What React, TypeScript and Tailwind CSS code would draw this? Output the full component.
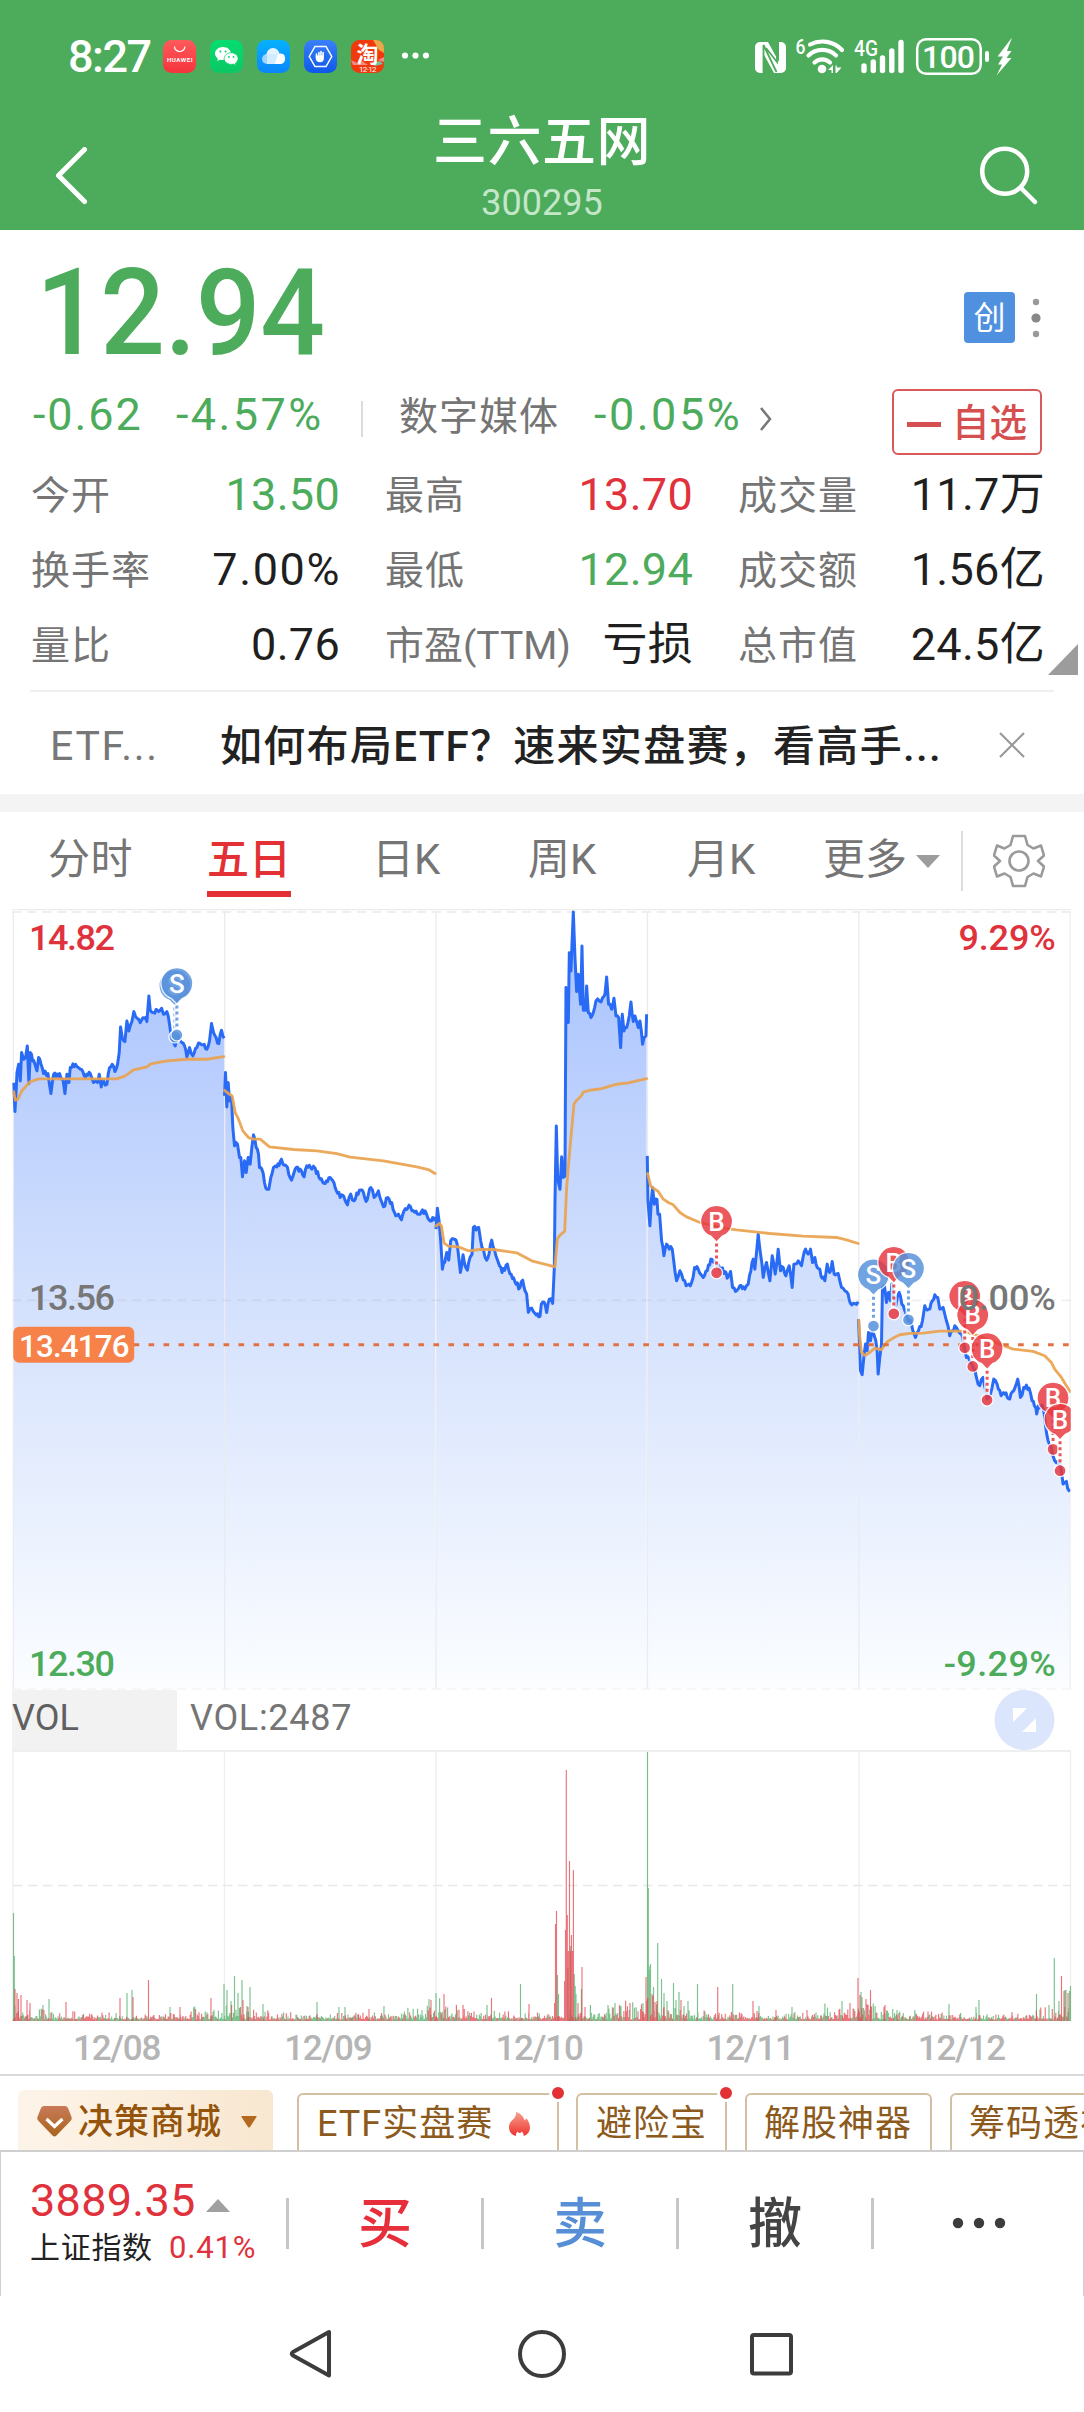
import React from 'react';
import clsx from 'clsx';

interface Stat {
  label: string;
  value: string;
  tone?: 'up' | 'down';
}

interface Session {
  dx: number;
  dy: number;
  price: string;
  avg: string;
}

interface Marker {
  side: 'B' | 'S';
  x: number;
  y: number;
}

const stats: Stat[] = [
  { label: '今开', value: '13.50', tone: 'down' },
  { label: '最高', value: '13.70', tone: 'up' },
  { label: '成交量', value: '11.7万' },
  { label: '换手率', value: '7.00%' },
  { label: '最低', value: '12.94', tone: 'down' },
  { label: '成交额', value: '1.56亿' },
  { label: '量比', value: '0.76' },
  { label: '市盈(TTM)', value: '亏损' },
  { label: '总市值', value: '24.5亿' },
];

// One entry per trading day, chart units are a third of a pixel
const sessions: Session[] = [
  {
    dx: 0,
    dy: 0,
    price:
      '40,545 44,632 48,560 50,515 55,490 60,540 64,455 70,475 76,470 81,435 86,548 90,455 97,480 104,490 110,510 115,470 122,490 130,518 143,518 152,578 160,520 178,518 188,535 194,578 200,520 206,545 210,500 226,490 240,505 252,525 270,518 280,545 292,545 297,520 303,558 310,540 320,550 328,500 336,490 344,512 352,490 357,455 361,378 366,410 374,422 380,360 386,390 395,362 401,332 410,352 420,365 432,352 440,362 446,285 450,328 460,335 475,332 484,322 490,340 500,332 508,370 512,400 525,435 535,405 545,425 553,435 560,468 568,440 578,465 590,440 600,428 612,430 620,445 628,420 634,368 640,395 648,410 656,428 664,388 668,405 672,412',
    avg: '40,572 45,598 52,596 66,568 90,542 115,534 200,534 350,534 375,525 400,507 440,498 452,489 500,480 560,475 620,475 671,467',
  },
  {
    dx: 0,
    dy: 0,
    price:
      '673,585 676,515 680,618 684,545 688,600 694,590 698,680 703,735 712,730 718,770 722,770 727,828 733,780 738,815 744,770 750,790 755,740 760,702 768,740 775,760 778,800 785,805 793,845 800,865 806,865 812,830 820,800 830,798 844,775 858,795 874,838 885,805 900,805 912,828 920,795 935,805 945,802 960,835 975,848 990,830 1005,860 1020,890 1030,885 1042,912 1052,880 1062,900 1078,868 1090,875 1098,902 1112,860 1122,890 1135,870 1150,918 1163,890 1175,905 1187,945 1195,940 1204,957 1212,930 1227,913 1240,930 1260,940 1275,930 1287,957 1305,948',
    avg: '673,568 685,578 696,585 705,635 715,655 728,690 745,710 760,715 780,715 808,738 880,746 950,750 1010,758 1050,769 1150,780 1250,798 1285,806 1305,818',
  },
  {
    dx: 1260,
    dy: 0,
    price:
      '48,985 52,922 57,960 62,1020 67,1105 74,1085 80,1055 86,1078 92,1020 108,1018 115,1060 121,1115 129,1062 136,1098 142,1108 150,1070 156,1060 160,980 176,980 182,1020 190,1045 200,1078 207,1060 215,1018 224,1050 235,1085 246,1115 262,1090 270,1120 288,1150 300,1160 308,1138 315,1170 320,1180 325,1235 335,1222 345,1238 360,1247 364,1210 373,1205 380,1235 388,1195 398,1208 403,1100 405,900 409,675 413,830 420,865 425,768 430,830 435,825 438,260 443,300 445,365 448,155 453,210 456,130 460,33 465,170 470,272 475,220 482,310 486,135 490,328 497,328 500,255 505,335 513,350 520,335 528,300 538,300 548,290 555,280 560,228 566,310 575,325 582,292 588,345 596,350 602,440 607,340 612,390 620,380 628,345 633,303 640,362 645,345 655,380 660,360 668,430 672,410 678,405 680,340',
    avg: '48,975 58,968 64,975 72,1027 85,1036 115,1038 145,1050 180,1046 220,1046 290,1056 335,1080 385,1093 405,1098 412,1015 420,1003 434,992 440,860 450,740 462,610 470,598 483,586 490,574 510,568 545,563 590,550 625,546 650,540 680,533',
  },
  {
    dx: 1260,
    dy: 0,
    price:
      '682,765 684,900 690,975 694,900 698,860 703,910 711,895 714,940 719,940 725,1020 732,1065 740,1030 748,1045 757,1045 762,1085 770,1140 780,1110 790,1138 803,1152 815,1145 824,1100 835,1105 850,1130 862,1110 873,1075 888,1088 900,1105 915,1112 922,1132 932,1112 938,1160 947,1172 960,1155 975,1165 985,1150 993,1110 1000,1075 1005,1105 1015,1000 1022,1060 1030,1130 1040,1085 1050,1140 1057,1065 1066,1120 1075,1045 1082,1110 1090,1100 1098,1125 1108,1095 1117,1160 1122,1090 1135,1080 1145,1095 1157,1045 1165,1060 1172,1045 1178,1085 1185,1070 1192,1100 1200,1105 1207,1132 1215,1140 1222,1090 1230,1115 1237,1082 1243,1120 1255,1118 1265,1160 1275,1170 1285,1180 1292,1208 1305,1208 1315,1203',
    avg: '683,818 692,855 700,862 715,872 730,895 745,905 760,912 780,935 800,948 840,965 900,980 950,987 1050,998 1150,1006 1250,1010 1280,1017 1315,1028',
  },
  {
    dx: 2400,
    dy: 750,
    price:
      '176,505 180,600 182,660 187,672 192,620 197,580 202,600 206,545 212,570 216,545 222,550 228,570 232,600 235,670 240,620 245,580 248,410 254,405 260,455 266,425 272,450 276,400 282,440 288,465 298,425 306,460 315,480 325,510 335,520 347,560 356,540 368,510 375,465 390,475 398,450 405,432 414,440 420,475 430,470 440,510 450,555 458,540 465,525 475,540 485,550 492,580 500,620 510,630 520,650 530,680 540,705 550,680 562,745 572,730 582,685 592,700 604,735 615,730 630,745 642,720 654,685 662,740 672,710 688,712 697,750 708,770 711,790 716,765 730,770 738,830 745,870 755,890 765,930 780,935 790,1000 800,992 808,1020 811,1022',
    avg: '177,508 180,560 185,605 195,614 210,605 225,592 245,597 260,575 280,562 300,552 330,548 370,547 420,541 490,541 520,550 560,565 610,584 640,595 700,602 735,615 755,635 765,655 785,680 800,705 811,722',
  },
];

const markers: Marker[] = [
  { side: 'S', x: 524, y: 254 },
  { side: 'S', x: 530, y: 248 },
  { side: 'B', x: 2150, y: 962 },
  { side: 'S', x: 2621, y: 1122 },
  { side: 'B', x: 2682, y: 1085 },
  { side: 'S', x: 2726, y: 1103 },
  { side: 'B', x: 2895, y: 1187 },
  { side: 'B', x: 2919, y: 1243 },
  { side: 'B', x: 2962, y: 1344 },
  { side: 'B', x: 3160, y: 1492 },
  { side: 'B', x: 3181, y: 1556 },
];

const gridX = [13, 224.5, 436, 647.5, 859, 1070.5];

// x:height, split by colour
const redSpikes =
  '15:32 17:28 18.5:22 21:26 27:21 30:18 66:19 120:23 133:24 148.5:41 180:14 211:23 243:21 248:14 369:12 431:21 444:27 463:16 491.5:23 529:17 554.6:18 555.5:97 556.5:110 564.6:40 565.5:91 566.3:251 567.3:106 568.3:70 569.5:160 570.3:70 571.4:86 572.4:70 573.4:151 578:18 582:54 585:14 630:18 646:44 652:27 653:25 655:19 657:20 664:14 681:21 717.7:34 753:20 757:10 807:11 776:11 850:18 858:43 860:26 866:22 870.5:31 884:14 885:16 1012:9 1061.5:45 1064:30 1068:28';
const greenSpikes =
  '13.5:108 14.3:65 49:22 43:16 127:28 132:31 170:14 224:37 227:31 231:20 234.5:45 238:28 242:41 247:15 250:34 263:17 317:19 339:14 345:14 384:15 429:22 436:28 487:16 520.5:37 557.5:46 558.5:27 567.9:53 570.7:75 574.3:47 575.2:35 576:27 581.4:32 608:16 615:18 621:15 643:18 647.5:269 648.3:133 649:55 649.8:51 650.5:57 653.5:34 657.7:78 661.5:42 664:28 667:20 673.5:38 676:21 679:29 684:15 688:20 697.5:37 732.7:37 759:15 792:14 842:20 861:29 862:24 897:11 949:17 979:21 976:14 1036.5:27 1049:16 1054.3:63 1059:20 1065:31 1066:31 1070.5:35 1069.5:30';

const parsePoints = (raw: string): number[][] =>
  raw.split(' ').map((p) => p.split(',').map(Number));

const createRandom = (start: number) => {
  let seed = start;
  return () => {
    seed = (seed * 16807) % 2147483647;
    return seed / 2147483647;
  };
};

// Adds the minute ticks between the turning points
const toTicks = (raw: string): string => {
  const random = createRandom(77);
  const points = parsePoints(raw);
  const out: string[] = [];
  points.forEach(([x, y], i) => {
    out.push(`${x},${y}`);
    const next = points[i + 1];
    if (!next || next[0] - x < 7) return;
    const steps = Math.floor((next[0] - x) / 3.5);
    for (let s = 1; s < steps; s++) {
      const k = s / steps;
      const jitter = (random() - 0.5) * 16;
      out.push(`${(x + (next[0] - x) * k).toFixed(1)},${(y + (next[1] - y) * k + jitter).toFixed(1)}`);
    }
  });
  return out.join(' ');
};

const buildVolume = () => {
  const random = createRandom(2025);
  const red: string[] = [];
  const green: string[] = [];
  for (let i = 0; i < 1200; i++) {
    const x = 13 + i * 0.8815;
    const minute = i % 240;
    const open = 8 * Math.exp(-minute / 28);
    const close = minute > 200 ? 4 : 0;
    const rally = i > 620 && i < 720 ? 3 : 0;
    const h = 1.5 + (3.4 + open + close + rally) * -Math.log(1 - random() * 0.94) * 0.8;
    const bar = `M${x.toFixed(1)} 271v${(-h).toFixed(1)}`;
    const wave = Math.sin(i / 17) * 0.2 + 0.5;
    (random() > wave ? red : green).push(bar);
  }
  const spikes = (raw: string) => raw.split(' ').map((s) => {
    const [x, h] = s.split(':');
    return `M${x} 271v-${h}`;
  });
  return {
    red: red.concat(spikes(redSpikes)).join(''),
    green: green.concat(spikes(greenSpikes)).join(''),
  };
};

const volume = buildVolume();

const AppIcons: React.FC = () => (
  <svg width="266" height="34" viewBox="0 0 266 34">
    <defs>
      <linearGradient id="hw" x1="0" y1="0" x2="0" y2="1"><stop offset="0" stopColor="#ff5a5c" /><stop offset="1" stopColor="#f5343c" /></linearGradient>
      <linearGradient id="wx" x1="0" y1="0" x2="0" y2="1"><stop offset="0" stopColor="#05dd70" /><stop offset="1" stopColor="#0cc763" /></linearGradient>
      <linearGradient id="cl" x1="0" y1="0" x2="0" y2="1"><stop offset="0" stopColor="#06b2ff" /><stop offset="1" stopColor="#0a86fb" /></linearGradient>
      <linearGradient id="hd" x1="0" y1="0" x2="0" y2="1"><stop offset="0" stopColor="#3a80fa" /><stop offset="1" stopColor="#0d58e8" /></linearGradient>
    </defs>
    <rect width="33" height="33" rx="8.5" fill="url(#hw)" />
    <path d="M11.5 6.500a5.200 5 0 0 0 10.400 0" fill="none" stroke="#fff" strokeWidth="1.200" />
    <text x="4" y="21.500" fill="#fff" fontSize="6.200" fontWeight="700" textLength="25.500">HUAWEI</text>
    <g transform="translate(47 0)">
      <rect width="33" height="33" rx="8.5" fill="url(#wx)" />
      <path d="M13 7c-4.500 0-8 2.900-8 6.600 0 2 1.100 3.900 2.900 5.100l-.8 2.400 2.900-1.400c1 .3 2 .4 3 .4 4.300 0 8-3 8-6.500C21 9.900 17.500 7 13 7z" fill="#fff" />
      <path d="M21.200 12.800c-4 0-7 2.600-7 5.800s3 5.800 7 5.800c.8 0 1.600-.1 2.300-.3l2.500 1.300-.6-2.200c1.700-1.100 2.700-2.700 2.700-4.600 0-3.200-3-5.800-6.900-5.800z" fill="#fff" stroke="#0bd06a" strokeWidth=".8" />
      <g fill="#0bd06a"><circle cx="10.400" cy="11.500" r="1" /><circle cx="15.600" cy="11.500" r="1" /><circle cx="19" cy="17" r=".9" /><circle cx="23.500" cy="17" r=".9" /></g>
    </g>
    <g transform="translate(94 0)">
      <rect width="33" height="33" rx="8.5" fill="url(#cl)" />
      <circle cx="10" cy="19" r="5" fill="#9fd5ff" />
      <circle cx="16" cy="14.500" r="6.500" fill="#e4f3ff" />
      <path d="M15 24a12 12 0 0 1 5-9c5-3.500 9 0 8 5a5 5 0 0 1-5 4z" fill="#fff" />
      <path d="M10 24h8l3-10H10z" fill="#d3ebff" />
    </g>
    <g transform="translate(141 0)">
      <rect width="33" height="33" rx="8.5" fill="url(#hd)" />
      <path d="M11 6.500h11l5.700 10-5.700 10H11l-5.700-10z" fill="none" stroke="#fff" strokeWidth="1.500" />
      <path d="M12.500 16.500v-2.500M14.900 16v-3.500M17 16v-4.500M19.100 16v-3.500" stroke="#fff" strokeWidth="1.600" strokeLinecap="round" />
      <path d="M11.700 15.500h8.200v2.500c0 3-1.300 4.300-3.800 4.300s-4.400-1.600-4.400-4z" fill="#fff" />
    </g>
    <g transform="translate(188 0)">
      <rect width="33" height="33" rx="8.5" fill="#f03a0c" />
      <path d="M22 0h3a8 8 0 0 1 8 8v5l-5-3z" fill="#e8a74a" />
      <path d="M0 20l6 3 5-2 6 4H2zM27 20l6-3v5z" fill="#f58a8a" />
      <path d="M20 23l9-2 3 3-8 2z" fill="#6fc2a0" />
      <text x="16.500" y="21.500" fill="#fff" fontSize="22" fontWeight="700" textAnchor="middle">淘</text>
      <text x="8" y="31.800" fill="#fff" fontSize="8" textLength="17.500">12·12</text>
    </g>
    <g fill="#fff"><circle cx="242" cy="15.500" r="3.100" /><circle cx="252.500" cy="15.500" r="3.100" /><circle cx="263" cy="15.500" r="3.100" /></g>
  </svg>
);

const SystemIcons: React.FC = () => (
  <svg width="260" height="48" viewBox="754 32 260 48">
    <path d="M760 41h8l11 20V41h2a5 5 0 0 1 5 5v21a5 5 0 0 1-5 5h-7l-11-20v20h-3a5 5 0 0 1-5-5V46a5 5 0 0 1 5-5z" fill="#fff" />
    <path d="M763.500 72V44l13 27M777 41v20l-11-14" fill="none" stroke="#4dab5c" strokeWidth="1.800" />
    <text x="795.500" y="53" fill="#fff" fontSize="20" fontWeight="500" textLength="10" lengthAdjust="spacingAndGlyphs">6</text>
    <g fill="none" stroke="#fff" strokeWidth="4.200" strokeLinecap="round">
      <path d="M810 43.500a27 27 0 0 1 32 5.500" />
      <path d="M808.500 54.500a19.500 19.500 0 0 1 27.500 0" />
      <path d="M814.500 61.500a11 11 0 0 1 15.500 0" />
    </g>
    <circle cx="822" cy="68" r="4.300" fill="#fff" />
    <path d="M828 69l5-5v8h-1.500v-3zM835.500 64.500V72h1.200l4.800-5.500h-4.800v-2z" fill="#fff" />
    <text x="854" y="54.500" fill="#fff" fontSize="21.500" fontWeight="500" textLength="24" lengthAdjust="spacingAndGlyphs">4G</text>
    <g stroke="#fff" strokeWidth="5.400" strokeLinecap="round">
      <path d="M864 65v4.500M873.300 61v8.500M882.500 57v12.500M891.800 50v19.500M901 41.500v28" />
    </g>
    <rect x="917.200" y="38.200" width="63.500" height="34.500" rx="9" fill="none" stroke="#fff" strokeWidth="2.500" />
    <text x="922" y="66.800" fill="#fff" fontSize="32" fontWeight="500" textLength="53">100</text>
    <rect x="985" y="50" width="4" height="11" rx="2" fill="#fff" />
    <path d="M1012 36.500l-14.500 19h5.500l-5 8h4l-5.500 11 15-17.500h-5l5-7h-4.500z" fill="#fff" />
  </svg>
);

const Header: React.FC = () => (
  <header className="flex h-[230px] flex-col bg-[#4dab5c] text-white">
    <div className="flex h-[113px] items-center pl-[68px] pr-[70px]">
      <span className="w-[95px] text-[45px] font-medium leading-none tracking-[-1.500px]">8:27</span>
      <AppIcons />
      <div className="ml-auto">
        <SystemIcons />
      </div>
    </div>
    <div className="flex h-[117px] justify-between pl-[52px] pr-[44px]">
      <svg className="mt-[34px]" width="60" height="58" viewBox="0 0 60 58" fill="none" stroke="#fff" strokeWidth="5" strokeLinecap="round" strokeLinejoin="round">
        <path d="M32.500 2.500L6.500 28.500l26 26" />
      </svg>
      <div className="mr-2 flex flex-col items-center">
        <h1 className="h-[64px] text-[54px] font-medium leading-[60px] tracking-[0.500px]">三六五网</h1>
        <p className="text-[36px] leading-[60px] text-[#c4e6c9]">300295</p>
      </div>
      <svg className="mt-[31px]" width="60" height="62" viewBox="980 144 60 62" fill="none" stroke="#fff" strokeWidth="4.500" strokeLinecap="round">
        <circle cx="1004.700" cy="171.300" r="22.500" />
        <path d="M1021.500 188.500L1035 202" />
      </svg>
    </div>
  </header>
);

const Quote: React.FC = () => (
  <section className="h-[460px] text-[#222]">
    <div className="flex h-[148px] items-center justify-between pl-[36px] pr-[43px]">
      <span className="origin-left scale-x-[0.95] pt-[18px] text-[120px] font-medium leading-none tracking-[-0.500px] text-[#4dab5c]">12.94</span>
      <div className="flex items-center gap-4 pt-[27px]">
        <span className="flex h-[51px] w-[51px] items-center justify-center rounded-[4px] bg-[#4f90df] text-[32px] leading-none text-white">创</span>
        <svg width="10" height="40" viewBox="0 0 10 40" fill="#999">
          <circle cx="5" cy="4" r="3.200" />
          <circle cx="5" cy="20" r="4.600" fill="#888" />
          <circle cx="5" cy="36" r="3.200" />
        </svg>
      </div>
    </div>
    <div className="flex h-[79px] pl-[33px] pr-[42px] text-[45px] leading-[74px] text-[#4dab5c]">
      <span className="w-[143px] tracking-[1.900px]">-0.62</span>
      <span className="w-[185px] tracking-[2.400px]">-4.57%</span>
      <i className="mt-[23px] h-9 w-[2px] bg-[#dcdcdc]" />
      <span className="ml-[36px] w-[195px] pt-[2px] text-[39px] tracking-[1px] text-[#757575]">数字媒体</span>
      <span className="w-[165px] tracking-[2.500px]">-0.05%</span>
      <svg className="mt-[28px]" width="16" height="26" viewBox="0 0 16 26" fill="none" stroke="#777" strokeWidth="2.500">
        <path d="M2 2l9 11-9 11" />
      </svg>
      <button className="ml-auto mt-[11px] flex h-[66px] w-[150px] items-center justify-center gap-[11px] rounded-[6px] border-2 border-[#d95a5a] text-[37.500px] leading-none text-[#d64f50]">
        <i className="mt-1 h-[5px] w-[34px] bg-[#d64f50]" />
        <span className="pt-1 font-medium">自选</span>
      </button>
    </div>
    <div className="relative">
      <dl className="grid grid-cols-[309px_308px_307px] gap-x-[45px] pl-[31px]">
        {stats.map((item) => (
          <div key={item.label} className="flex h-[75px] items-center justify-between">
            <dt
              className={clsx(
                'whitespace-nowrap pt-[3px] text-[39px] leading-none text-[#757575]',
                item.label.includes('TTM') ? 'tracking-normal' : 'tracking-[1px]',
              )}
            >
              {item.label}
            </dt>
            <dd
              className={clsx(
                'whitespace-nowrap text-[45px] leading-none',
                item.value.includes('%') ? '-mr-px tracking-[1.600px]' : 'tracking-[0.300px]',
                item.tone === 'up' && 'text-[#e0323c]',
                item.tone === 'down' && 'text-[#4dab5c]',
                !item.tone && 'text-[#1f1f1f]',
              )}
            >
              {item.value}
            </dd>
          </div>
        ))}
      </dl>
      <svg className="absolute right-[6px] top-[187px]" width="30" height="31" viewBox="0 0 30 31">
        <path d="M30 0v31H0z" fill="#9c9c9c" />
      </svg>
    </div>
  </section>
);

const Notice: React.FC = () => (
  <section className="flex h-[104px] items-center pl-[30px] pr-[30px]">
    <div className="flex h-full w-full items-center border-t-2 border-[#efefef] pt-2 text-[41px] leading-none">
      <span className="w-[190px] pl-5 tracking-[1.700px] text-[#777]">ETF...</span>
      <span className="text-[42px] font-medium tracking-[1.300px] text-[#222]">如何布局ETF？速来实盘赛，看高手...</span>
      <svg className="-mt-1 ml-auto mr-[29px]" width="26" height="26" viewBox="0 0 26 26" stroke="#999" strokeWidth="2.200">
        <path d="M1 1l24 24M25 1L1 25" />
      </svg>
    </div>
  </section>
);

const Tabs: React.FC = () => (
  <nav className="flex h-[97px] text-[42px] leading-[95px] text-[#757575]">
    <span className="ml-[48px] w-[159px] tracking-[0.500px]">分时</span>
    <span className="flex w-[165px] flex-col">
      <span className="h-[79px] font-medium text-[#e23034]">五日</span>
      <i className="h-[6px] w-[84px] bg-[#e23034]" />
    </span>
    <span className="w-[156px]">日K</span>
    <span className="w-[159px]">周K</span>
    <span className="w-[136px]">月K</span>
    <span className="w-[93px]">更多</span>
    <svg className="mt-[43px]" width="24" height="13" viewBox="0 0 24 13"><path d="M0 0h24L12 13z" fill="#9c9c9c" /></svg>
    <i className="ml-[21px] mt-[19px] h-[60px] w-[2px] bg-[#dedede]" />
    <svg className="ml-[30px] mt-[22px]" width="52" height="54" viewBox="0 0 52 54" fill="none" stroke="#9a9a9a" strokeWidth="2.600" strokeLinejoin="round">
      <path d="M20 2h12l2.500 9 6 3.500 7.500-3 3 10-6 5.500 6 5.500-3 10-7.500-3-6 3.500-2.500 9H20l-2.500-9-6-3.500-7.500 3-3-10L7 27l-6-5.500 3-10 7.500 3 6-3.500z" />
      <circle cx="26" cy="27" r="9.500" />
    </svg>
  </nav>
);

const MarkerPin: React.FC<Marker> = ({ side, x, y }) => {
  const fill = side === 'B' ? '#e8393f' : '#5792dc';
  return (
    <g transform={`translate(${x} ${y})`}>
      <path d="M0 62V136" stroke="#fff" strokeWidth="18" opacity=".8" />
      <path d="M0 66V136" stroke={fill} strokeWidth="9" strokeDasharray="9 9" opacity=".85" />
      <circle cy="154" r="18" fill={fill} stroke="#fff" strokeWidth="4" opacity=".85" />
      <path d="M0 62L-16 45A48 48 0 1 1 16 45z" fill={fill} stroke="#fff" strokeWidth="4" opacity=".84" />
      <text y="28" fill="#fff" fontSize="78" fontWeight="500" textAnchor="middle">{side}</text>
    </g>
  );
};

const PriceChart: React.FC = () => (
  <svg className="block" width="1084" height="782" viewBox="0 24 3252 2346">
    <defs>
      <linearGradient id="area" gradientUnits="userSpaceOnUse" x1="0" y1="33" x2="0" y2="2364">
        <stop offset="0" stopColor="#a6c1fe" />
        <stop offset="0.500" stopColor="#d4e1fd" />
        <stop offset="1" stopColor="#fbfdff" />
      </linearGradient>
      <clipPath id="plot"><rect x="36" y="24" width="3177" height="2346" /></clipPath>
    </defs>
    <path d="M36 26H3213" stroke="#ececec" strokeWidth="4" />
    <path d="M36 33H3213M36 2364H3213" stroke="#efefef" strokeWidth="6" strokeDasharray="27 18" />
    <g clipPath="url(#plot)">
      {sessions.map((s, i) => {
        const points = parsePoints(s.price);
        const floor = 2364 - s.dy;
        return (
          <polygon
            key={i}
            transform={`translate(${s.dx} 0)`}
            points={`${points[0][0]},${floor + s.dy} ${parsePoints(toTicks(s.price))
              .map(([x, y]) => `${x},${y + s.dy}`)
              .join(' ')} ${points[points.length - 1][0]},${floor + s.dy}`}
            fill="url(#area)"
          />
        );
      })}
      {gridX.map((x) => (
        <path key={x} d={`M${x * 3} 33V2364`} stroke="#e9ebf0" strokeWidth="4" />
      ))}
      <path d="M36 1199H3213" stroke="#999" strokeOpacity=".16" strokeWidth="5" strokeDasharray="27 18" />
      {sessions.map((s, i) => (
        <g key={i} transform={`translate(${s.dx} ${s.dy})`} fill="none" strokeLinejoin="round">
          <polyline points={toTicks(s.price)} stroke="#2a6bf6" strokeWidth="9" />
          <polyline points={s.avg} stroke="#e9a24e" strokeWidth="8.500" opacity=".92" strokeLinecap="round" />
        </g>
      ))}
      <path d="M400 1332H3213" stroke="#e2713f" strokeWidth="9" strokeDasharray="17 28" />
      {markers.map((m, i) => (
        <MarkerPin key={i} {...m} />
      ))}
    </g>
    <rect x="39" y="1278" width="363" height="108" rx="18" fill="#f6824a" />
    <text x="56" y="1369" fill="#fff" fontSize="94" fontWeight="500" textLength="332">13.4176</text>
    <g fontSize="108" fontWeight="500">
      <text x="86" y="147" fill="#e0323c" textLength="258">14.82</text>
      <text x="86" y="1229" fill="#777" textLength="258">13.56</text>
      <text x="86" y="2326" fill="#4dab5c" textLength="258">12.30</text>
      <text x="2876" y="147" fill="#e0323c" textLength="292">9.29%</text>
      <text x="2876" y="1229" fill="#777" textLength="292">0.00%</text>
      <text x="2832" y="2326" fill="#4dab5c" textLength="336">-9.29%</text>
    </g>
  </svg>
);

const VolumePanel: React.FC = () => (
  <section>
    <div className="flex h-[60px] items-center pl-3 text-[36px] leading-none text-[#757575]">
      <span className="flex h-full w-[165px] items-center bg-[#f2f2f2] pb-1 text-[#606060]">VOL</span>
      <span className="pb-1 pl-[13px] tracking-[0.700px]">VOL:2487</span>
      <svg className="ml-auto mr-[29px]" width="61" height="60" viewBox="0 0 61 60">
        <circle cx="30.500" cy="30" r="30" fill="#dbe6fc" />
        <path d="M19 18h14L19 32zM42 42H28l14-14z" fill="#fff" />
      </svg>
    </div>
    <svg className="block" width="1084" height="272" viewBox="0 0 1084 272">
      <path d="M12 1H1071" stroke="#efefef" strokeWidth="2" />
      {gridX.map((x) => (
        <path key={x} d={`M${x} 1V271`} stroke="#eee" strokeWidth="1.300" />
      ))}
      <path d="M13 135.500H1071" stroke="#e8e8e8" strokeWidth="1.500" strokeDasharray="9.500 5.500" />
      <path d={volume.green} stroke="#4aab62" strokeOpacity=".72" strokeWidth="1.150" />
      <path d={volume.red} stroke="#e23f4a" strokeOpacity=".72" strokeWidth="1.150" />
    </svg>
    <div className="grid h-[52px] grid-cols-5 items-center pl-[11px] pr-[17px] text-center text-[35px] font-medium leading-none tracking-[-1.200px] text-[#b5b5b5]">
      {['12/08', '12/09', '12/10', '12/11', '12/12'].map((d) => (
        <span key={d}>{d}</span>
      ))}
    </div>
  </section>
);

const RedDot: React.FC = () => (
  <i className="absolute -right-[10px] -top-[11px] h-[18px] w-[18px] rounded-full border-[3px] border-white bg-[#e23034]" />
);

const Shortcuts: React.FC = () => {
  const chip =
    'relative flex h-[57px] shrink-0 items-center whitespace-nowrap rounded-t-[6px] border-2 border-b-0 border-[#d3bfa2]';
  return (
    <section className="h-[76px] overflow-hidden border-t-2 border-[#d9d9d9]">
      <div className="flex h-[74px] w-[1200px] items-end pl-[18px] text-[36px] leading-none tracking-[1px] text-[#8c5a1c]">
        <div className="mr-[24px] flex h-[60px] w-[255px] items-center rounded-t-[6px] bg-linear-to-r from-[#fdf4e9] to-[#f8e7d0] pl-[19px] pt-[3px] font-bold text-[#95540c]">
          <svg width="35" height="31" viewBox="0 0 35 31">
            <defs>
              <linearGradient id="gem" x1="0" y1="0" x2="0" y2="1"><stop offset="0" stopColor="#c97a58" /><stop offset="1" stopColor="#a9641c" /></linearGradient>
            </defs>
            <path d="M7 0h21q2 0 3 2l3.500 9q.8 2-.8 3.800L19.500 29.500q-2 1.800-4 0L1.300 14.800Q-.3 13 .5 11L4 2q1-2 3-2z" fill="url(#gem)" />
            <path d="M9.500 13l8 7.500 8-7.500" fill="none" stroke="#fff" strokeWidth="3.200" />
          </svg>
          <span className="ml-[6px] pt-[2px] text-[35px] font-medium">决策商城</span>
          <svg className="ml-[19px]" width="16" height="12" viewBox="0 0 16 12"><path d="M1 0h14q1 0 .5 1L9 11q-1 1-2 0L.5 1Q0 0 1 0z" fill="#b5691f" /></svg>
        </div>
        <div className={clsx(chip, 'mr-[17px] w-[262px] pl-[18px] pt-[2px]')}>
          <span>ETF实盘赛</span>
          <svg className="ml-[16px]" width="21" height="24" viewBox="0 0 21 24">
            <defs>
              <linearGradient id="fire" x1="0" y1="0" x2="0" y2="1"><stop offset="0" stopColor="#f7a08c" /><stop offset="1" stopColor="#ee3430" /></linearGradient>
            </defs>
            <path d="M7 0c4 1 8 4.500 8.500 8.500 1-.5 1.500-1.500 1.500-2.500 2.500 2.500 4 6 4 9.500 0 4.500-3 7.500-6.500 8.500.5-2-.5-3.500-2-4.500-.5 1-1 1.500-2 1.500-1 0-1.500-1-2-1.500-1 1-2 3-1.500 4.500C3 23 0 20 0 15.500 0 11 2 9.500 4 7.500 6 5.500 7.500 3 7 0z" fill="url(#fire)" />
          </svg>
          <RedDot />
        </div>
        <div className={clsx(chip, 'mr-[18px] w-[151px] pl-[18px] pt-[2px]')}>
          <span>避险宝</span>
          <RedDot />
        </div>
        <div className={clsx(chip, 'mr-[18px] w-[187px] pl-[17px] pt-[2px]')}>解股神器</div>
        <div className={clsx(chip, 'w-[190px] pl-[17px] pt-[2px]')}>筹码透视</div>
      </div>
    </section>
  );
};

const TradeBar: React.FC = () => (
  <section className="flex h-[146px] border-x border-t-2 border-[#cfcfcf]">
    <div className="w-[285px] pl-[29px] pt-[25px]">
      <div className="flex items-center text-[45px] leading-[48px] text-[#e0323c]">
        <span className="w-[176px] tracking-[0.300px]">3889.35</span>
        <svg className="mt-[9px]" width="24" height="13" viewBox="0 0 24 13"><path d="M12 0l12 13H0z" fill="#a0a0a0" /></svg>
      </div>
      <div className="flex items-center text-[30px] leading-[44px]">
        <span className="w-[139px] pt-px tracking-[0.700px] text-[#222]">上证指数</span>
        <span className="text-[31px] leading-[40px] tracking-[0.800px] text-[#e0323c]">0.41%</span>
      </div>
    </div>
    <div className="flex h-[142px] flex-1 items-center text-[54px] font-medium leading-none">
      <i className="h-[51px] w-[3px] bg-[#c6c6c6]" />
      <span className="w-[192px] pt-1 text-center text-[#e62f3a]">买</span>
      <i className="h-[51px] w-[3px] bg-[#c6c6c6]" />
      <span className="w-[192px] pt-1 text-center text-[#568fd6]">卖</span>
      <i className="h-[51px] w-[3px] bg-[#c6c6c6]" />
      <span className="w-[192px] pt-1 text-center text-[#444]">撤</span>
      <i className="h-[51px] w-[3px] bg-[#c6c6c6]" />
      <svg className="ml-[78px]" width="54" height="12" viewBox="0 0 54 12" fill="#3c3c3c">
        <circle cx="6" cy="6" r="5.200" />
        <circle cx="27" cy="6" r="5.200" />
        <circle cx="48" cy="6" r="5.200" />
      </svg>
    </div>
  </section>
);

const SystemNav: React.FC = () => (
  <footer className="flex h-[116px] items-center justify-center pr-[3px]">
    <svg width="504" height="50" viewBox="289 2329 504 50" fill="none" stroke="#3c3c3c" strokeWidth="4" strokeLinejoin="round">
      <path d="M329 2332v43.500L293 2355.500q-2.500-1.700 0-3.500z" />
      <circle cx="542" cy="2354" r="22" />
      <rect x="752" y="2335" width="39" height="38.500" rx="2" />
    </svg>
  </footer>
);

const App: React.FC = () => {
  return (
    <div className="flex h-[2412px] w-[1084px] flex-col overflow-hidden bg-white font-['Roboto','Noto_Sans_CJK_SC',sans-serif]">
      <Header />
      <Quote />
      <Notice />
      <div className="h-[18px] bg-[#f4f4f4]" />
      <Tabs />
      <PriceChart />
      <VolumePanel />
      <Shortcuts />
      <TradeBar />
      <SystemNav />
    </div>
  );
};

export default App;
